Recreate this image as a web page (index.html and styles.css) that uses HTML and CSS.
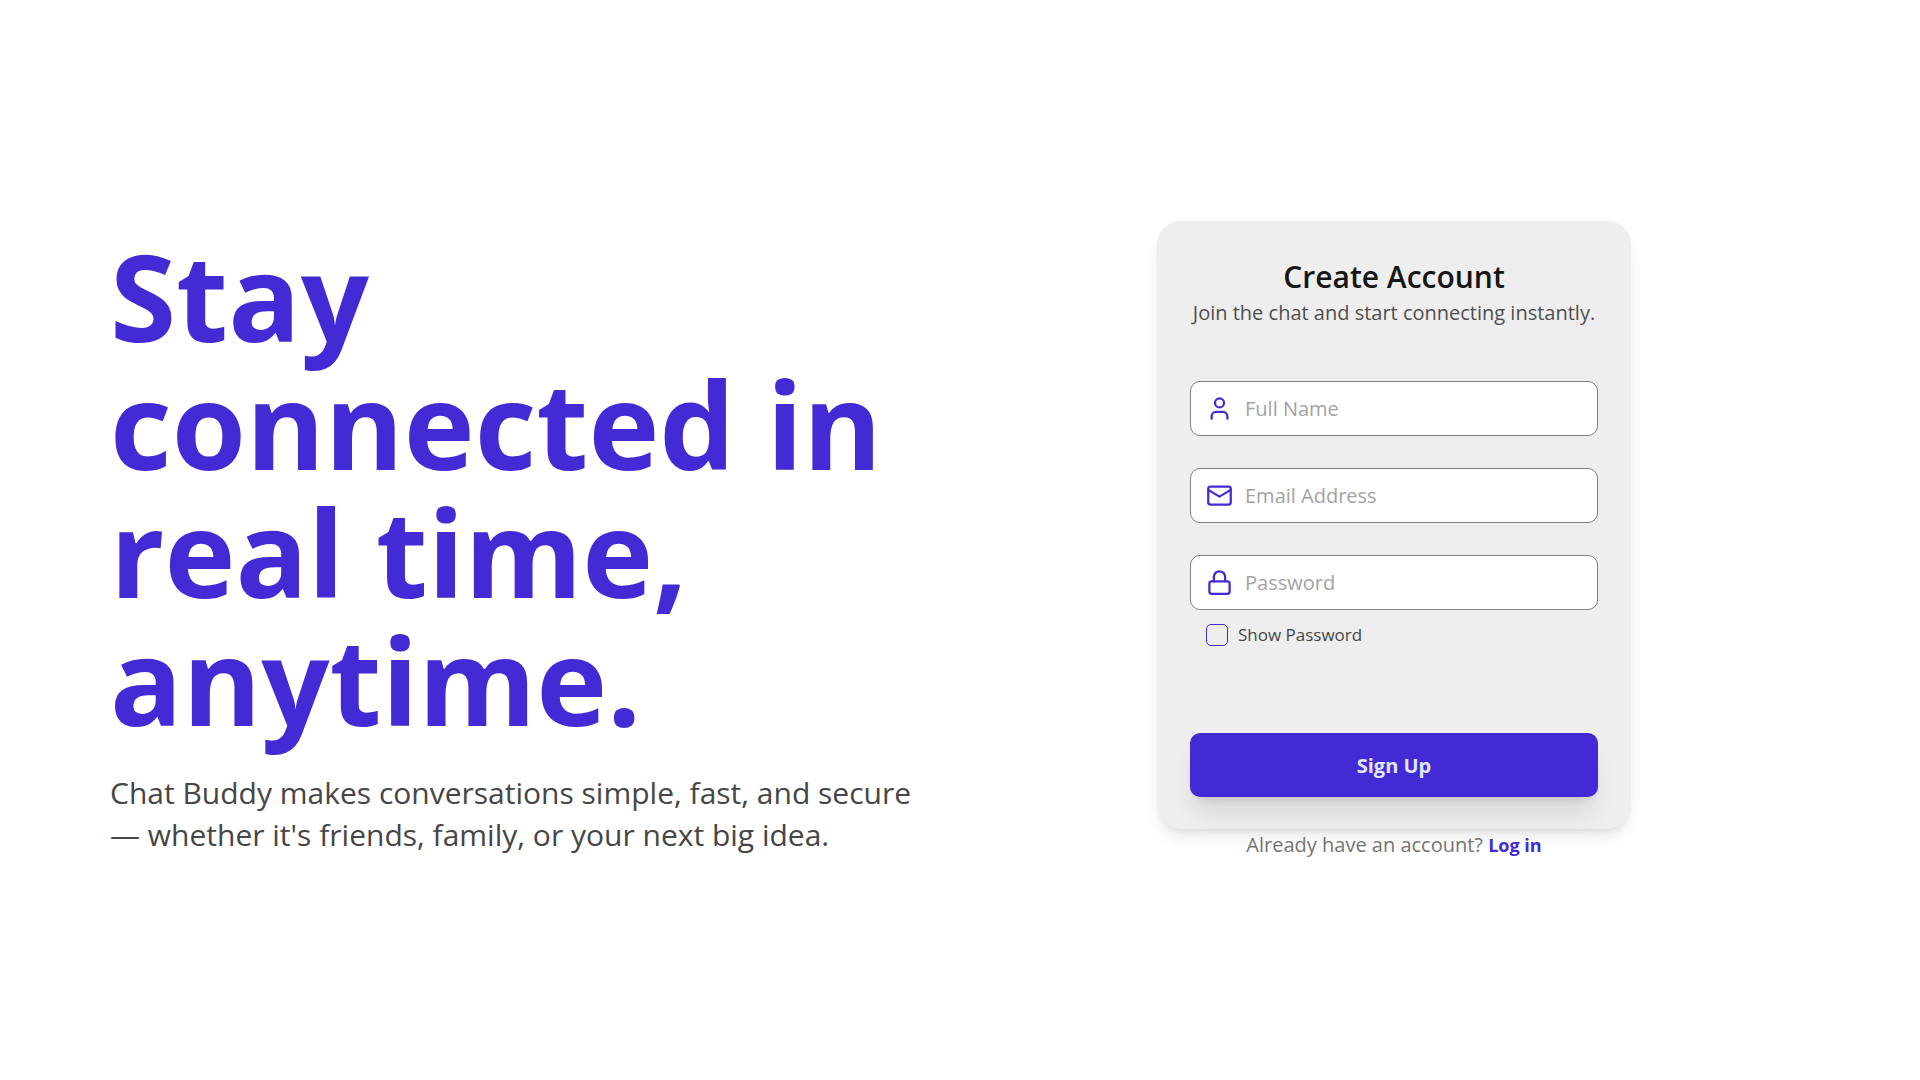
FILE: index.html
```html
<!DOCTYPE html>
<html lang="en">
<head>
<meta charset="utf-8">
<meta name="viewport" content="width=device-width, initial-scale=1">
<title>Chat Buddy – Create Account</title>
<link rel="stylesheet" href="styles.css">
</head>
<body>
<main class="page">
  <section class="hero">
    <h1 class="hero-title">Stay connected in real time, anytime.</h1>
    <p class="hero-text">Chat Buddy makes conversations simple, fast, and secure — whether it's friends, family, or your next big idea.</p>
  </section>
  <section class="signup">
    <form class="card">
      <header class="card-header">
        <h2 class="card-title">Create Account</h2>
        <p class="card-subtitle">Join the chat and start connecting instantly.</p>
      </header>
      <div class="fields">
        <label class="field">
          <svg class="icon" viewBox="0 0 24 24" aria-hidden="true"><path d="M19 21v-2a4 4 0 0 0-4-4H9a4 4 0 0 0-4 4v2"/><circle cx="12" cy="7" r="4"/></svg>
          <input class="input" type="text" placeholder="Full Name" aria-label="Full Name">
        </label>
        <label class="field">
          <svg class="icon" viewBox="0 0 24 24" aria-hidden="true"><rect x="2" y="4" width="20" height="16" rx="2"/><path d="m22 7-10 6L2 7"/></svg>
          <input class="input" type="email" placeholder="Email Address" aria-label="Email Address">
        </label>
        <label class="field">
          <svg class="icon" viewBox="0 0 24 24" aria-hidden="true"><rect x="3" y="11" width="18" height="11" rx="2"/><path d="M7 11V7a5 5 0 0 1 10 0v4"/></svg>
          <input class="input" type="password" placeholder="Password" aria-label="Password">
        </label>
      </div>
      <label class="show-password">
        <input class="checkbox" type="checkbox">
        <span>Show Password</span>
      </label>
      <button class="submit" type="submit">Sign Up</button>
    </form>
    <p class="login">Already have an account? <a class="login-link" href="#">Log in</a></p>
  </section>
</main>
</body>
</html>
```
FILE: styles.css
```css
* { box-sizing: border-box; margin: 0; }
body { font-family: "Open Sans", "Noto Sans", sans-serif; background: #fff; color: #161616; }
.page { display: grid; grid-template-columns: 1fr 1fr; align-items: center; min-height: 100vh; padding: 2px 98px 0 110px; }
.hero { padding: 6px 24px 0 0; }
.hero-title { font-size: 120px; line-height: 128px; font-weight: 700; color: #422ad5; }
.hero-text { margin-top: 28px; font-size: 30px; line-height: 42px; color: #464646; }
.signup { display: flex; flex-direction: column; align-items: center; }
.card { display: flex; flex-direction: column; width: 100%; max-width: 474px; padding: 32px 33px; border-radius: 24px; background: #eee; box-shadow: 0 10px 15px -3px rgba(0,0,0,.1), 0 4px 6px -4px rgba(0,0,0,.1); }
.card-header { text-align: center; }
.card-title { font-size: 30px; line-height: 48px; font-weight: 600; }
.card-subtitle { font-size: 20px; line-height: 24px; color: #505050; white-space: nowrap; }
.fields { display: grid; gap: 32px; margin-top: 56px; }
.field { display: flex; align-items: center; gap: 12px; height: 55px; padding: 0 15px; border: 1px solid #808080; border-radius: 10px; background: #fff; }
.icon { width: 27px; height: 27px; flex: none; fill: none; stroke: #422ad5; stroke-width: 2; stroke-linecap: round; stroke-linejoin: round; }
.input { flex: 1; min-width: 0; padding: 0; border: 0; outline: 0; background: none; font: inherit; font-size: 20px; color: inherit; }
.input::placeholder { color: #a3a3a3; opacity: 1; }
.show-password { display: flex; align-items: center; gap: 10px; margin-top: 12px; padding-left: 16px; font-size: 17px; line-height: 26px; color: #464646; }
.checkbox { appearance: none; width: 22px; height: 22px; margin: 0; border: 1px solid #422ad5; border-radius: 5px; }
.submit { height: 64px; margin-top: 85px; border: 0; border-radius: 10px; background: #422ad5; color: #e0e7ff; font: inherit; font-size: 20px; font-weight: 700; box-shadow: 0 20px 25px -5px rgba(0,0,0,.1), 0 8px 10px -6px rgba(0,0,0,.1); }
.login { font-size: 20px; line-height: 32px; color: #747474; }
.login-link { font-size: 18px; font-weight: 700; color: #422ad5; text-decoration: none; }
```
